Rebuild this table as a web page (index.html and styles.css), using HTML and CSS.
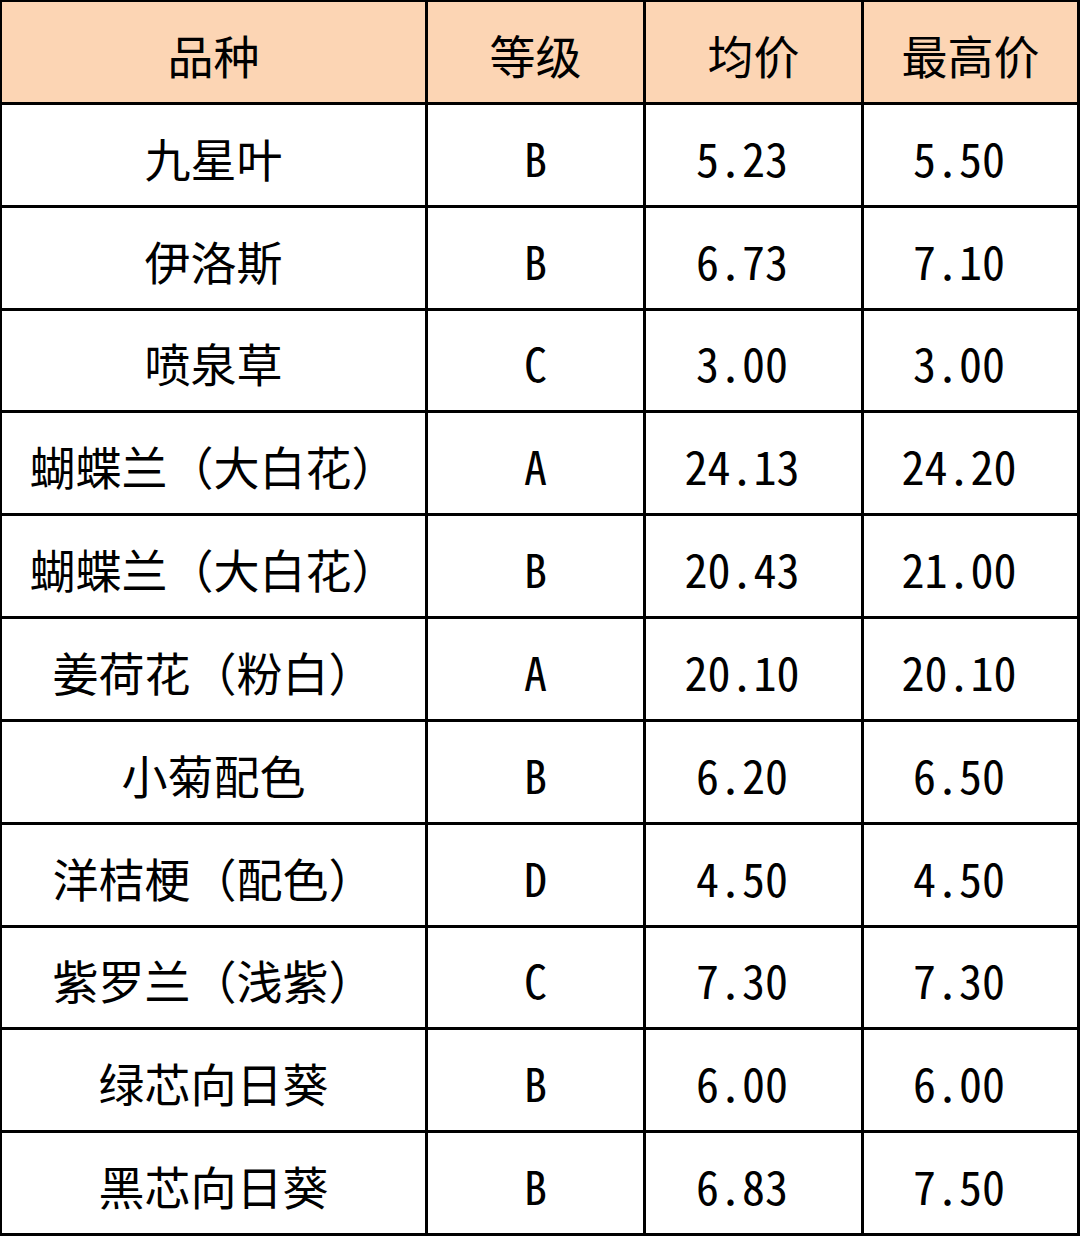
FILE: index.html
```html
<!DOCTYPE html>
<html lang="zh-CN">
<head>
<meta charset="utf-8">
<title>价格表</title>
<link rel="stylesheet" href="styles.css">
</head>
<body>
<div class="table">
  <div class="cell head">品种</div><div class="cell head">等级</div><div class="cell head">均价</div><div class="cell head">最高价</div>
  <div class="cell">九星叶</div><div class="cell grade">B</div><div class="cell num">5.23</div><div class="cell num">5.50</div>
  <div class="cell">伊洛斯</div><div class="cell grade">B</div><div class="cell num">6.73</div><div class="cell num">7.10</div>
  <div class="cell">喷泉草</div><div class="cell grade">C</div><div class="cell num">3.00</div><div class="cell num">3.00</div>
  <div class="cell">蝴蝶兰（大白花）</div><div class="cell grade">A</div><div class="cell num">24.13</div><div class="cell num">24.20</div>
  <div class="cell">蝴蝶兰（大白花）</div><div class="cell grade">B</div><div class="cell num">20.43</div><div class="cell num">21.00</div>
  <div class="cell">姜荷花（粉白）</div><div class="cell grade">A</div><div class="cell num">20.10</div><div class="cell num">20.10</div>
  <div class="cell">小菊配色</div><div class="cell grade">B</div><div class="cell num">6.20</div><div class="cell num">6.50</div>
  <div class="cell">洋桔梗（配色）</div><div class="cell grade">D</div><div class="cell num">4.50</div><div class="cell num">4.50</div>
  <div class="cell">紫罗兰（浅紫）</div><div class="cell grade">C</div><div class="cell num">7.30</div><div class="cell num">7.30</div>
  <div class="cell">绿芯向日葵</div><div class="cell grade">B</div><div class="cell num">6.00</div><div class="cell num">6.00</div>
  <div class="cell">黑芯向日葵</div><div class="cell grade">B</div><div class="cell num">6.83</div><div class="cell num">7.50</div>
</div>
</body>
</html>
```
FILE: styles.css
```css
html, body {
  margin: 0;
  padding: 0;
  background: #ffffff;
}
.table {
  box-sizing: border-box;
  width: 1080px;
  height: 1236px;
  background: #000000;
  padding: 2px 3px 3px 2px;
  display: grid;
  grid-template-columns: 423px 215px 215px 213px;
  grid-template-rows: repeat(12, 1fr);
  gap: 3px;
  font-family: "Noto Sans CJK SC", sans-serif;
  font-size: 46px;
  color: #000000;
}
.cell {
  background: #ffffff;
  display: flex;
  align-items: center;
  justify-content: center;
  line-height: 1;
  padding-top: 4px;
  white-space: nowrap;
}
.head {
  background: #fcd5b4;
}
.grade,
.num {
  font-family: "Noto Sans Mono CJK SC", "Noto Sans CJK SC", sans-serif;
  font-feature-settings: "hwid" 1;
}
.num {
  padding-right: 23px;
}
```
